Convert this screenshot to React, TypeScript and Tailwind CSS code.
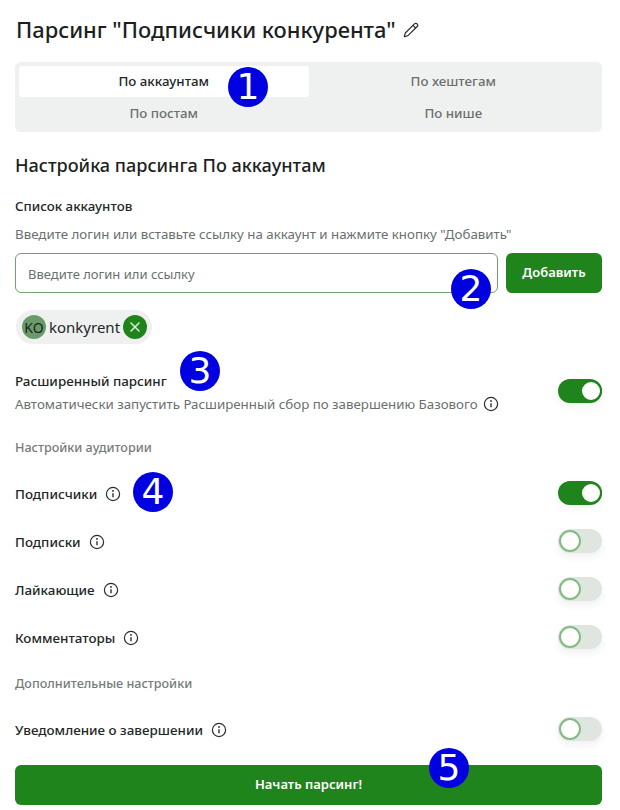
import { Pencil, X } from 'lucide-react';

const font = "font-['Noto_Sans',sans-serif]";

function Badge({ n, className }: { n: number; className: string }) {
  return (
    <div
      className={`absolute flex h-[40px] w-[40px] items-center justify-center rounded-full bg-[#0000e0] font-['DejaVu_Sans',sans-serif] text-[36px] leading-none text-white ${className}`}
    >
      {n}
    </div>
  );
}

function Toggle({ on }: { on?: boolean }) {
  if (on) {
    return (
      <div className="flex h-[24px] w-[44px] shrink-0 items-center justify-end rounded-full bg-[#20841c] shadow-[0_3px_8px_rgba(0,0,0,0.06)]">
        <div className="h-[22px] w-[22px] rounded-full border-[2px] border-[#20841c] bg-white" />
      </div>
    );
  }
  return (
    <div className="flex h-[24px] w-[44px] shrink-0 items-center justify-start rounded-full bg-[#dfe6e0] pl-[1px] shadow-[0_4px_8px_rgba(0,0,0,0.06)]">
      <div className="h-[22px] w-[22px] rounded-full border-[2px] border-[#84bb82] bg-white" />
    </div>
  );
}

function Info() {
  return (
    <svg width="16" height="16" viewBox="0 0 16 16" fill="none" className="shrink-0 text-[#2b2f2d]">
      <circle cx="8" cy="8" r="6.6" stroke="currentColor" strokeWidth="1.2" />
      <path d="M8 7.2v4" stroke="currentColor" strokeWidth="1.4" />
      <circle cx="8" cy="5" r="0.9" fill="currentColor" />
    </svg>
  );
}

function Row({ label, on, gap = 'mt-[24px]' }: { label: string; on?: boolean; gap?: string }) {
  return (
    <div className={`flex h-[24px] items-center justify-between ${gap}`}>
      <div className="flex items-center gap-[8px] pt-[2px]">
        <span className="text-[13.4px] font-medium text-[#232725]">{label}</span>
        <Info />
      </div>
      <Toggle on={on} />
    </div>
  );
}

export default function App() {
  return (
    <div className={`relative h-[810px] w-[620px] overflow-hidden bg-white pl-[15px] pr-[18px] ${font}`}>
      <div className="flex h-[60px] items-center gap-[7px] pl-[1px] mb-[2px]">
        <h1 className="text-[21.9px] font-medium leading-none text-[#1c1f1e]">Парсинг "Подписчики конкурента"</h1>
        <Pencil className="h-[16px] w-[16px] text-[#2b2f2d]" strokeWidth={1.8} />
      </div>

      <div className="grid h-[70px] grid-cols-2 content-start rounded-[6px] bg-[#eff1f1] px-[4px] pt-[4px] text-[13.3px]">
        <div className="flex h-[31px] items-center justify-center rounded-[3px] bg-white font-medium text-[#232725]">По аккаунтам</div>
        <div className="flex h-[31px] items-center justify-center font-medium text-[#6a706d]">По хештегам</div>
        <div className="flex h-[33px] items-center justify-center font-medium text-[#6a706d]">По постам</div>
        <div className="flex h-[33px] items-center justify-center font-medium text-[#6a706d]">По нише</div>
      </div>

      <h2 className="mt-[20px] text-[18.1px] font-medium leading-[26px] text-[#1c1f1e]">Настройка парсинга По аккаунтам</h2>

      <div className="mt-[19px] text-[13.3px] font-medium leading-[18px] text-[#232725]">Список аккаунтов</div>
      <p className="mt-[10px] text-[13.3px] leading-[18px] text-[#6a706d]">
        Введите логин или вставьте ссылку на аккаунт и нажмите кнопку "Добавить"
      </p>

      <div className="mt-[10px] flex gap-[8px]">
        <div className="flex h-[40px] flex-1 items-center rounded-[6px] border border-[#6fa06d] bg-white px-[12px] pt-[3px] text-[13px] text-[#6a706d]">
          Введите логин или ссылку
        </div>
        <button className="h-[40px] w-[96px] rounded-[6px] bg-[#20841c] text-[13px] font-semibold text-white">Добавить</button>
      </div>

      <div className="mt-[17px] ml-[1px] flex h-[34px] w-[136px] items-center gap-[3px] rounded-full bg-[#eff1f1] pl-[6px]">
        <div className="flex h-[24px] w-[24px] items-center justify-center rounded-full bg-[#6b9a6a] text-[14px] text-[#1c1f1e]">KO</div>
        <span className="text-[15px] text-[#232725]">konkyrent</span>
        <div className="flex h-[24px] w-[24px] items-center justify-center rounded-full bg-[#20841c]">
          <X className="h-[16px] w-[16px] text-[#dff0de]" strokeWidth={2} />
        </div>
      </div>

      <div className="mt-[27px] flex items-center justify-between">
        <div>
          <div className="text-[13.4px] font-medium leading-[20px] text-[#232725]">Расширенный парсинг</div>
          <div className="mt-[4px] flex items-center gap-[5px] text-[13.3px] leading-[18px] text-[#6a706d]">
            Автоматически запустить Расширенный сбор по завершению Базового <Info />
          </div>
        </div>
        <div className="-mt-[2px]">
          <Toggle on />
        </div>
      </div>

      <div className="mt-[26px] text-[12.6px] font-medium leading-[18px] text-[#767c79]">Настройки аудитории</div>

      <Row label="Подписчики" on gap="mt-[24px]" />
      <Row label="Подписки" />
      <Row label="Лайкающие" />
      <Row label="Комментаторы" />

      <div className="mt-[26px] text-[12.6px] font-medium leading-[18px] text-[#767c79]">Дополнительные настройки</div>

      <Row label="Уведомление о завершении" gap="mt-[24px]" />

      <button className="mt-[24px] h-[40px] w-full rounded-[6px] bg-[#20841c] text-[13px] font-semibold text-white">Начать парсинг!</button>

      <Badge n={1} className="left-[228px] top-[67px]" />
      <Badge n={2} className="left-[451px] top-[269px]" />
      <Badge n={3} className="left-[180px] top-[351px]" />
      <Badge n={4} className="left-[133px] top-[472px]" />
      <Badge n={5} className="left-[429px] top-[748px]" />
    </div>
  );
}
